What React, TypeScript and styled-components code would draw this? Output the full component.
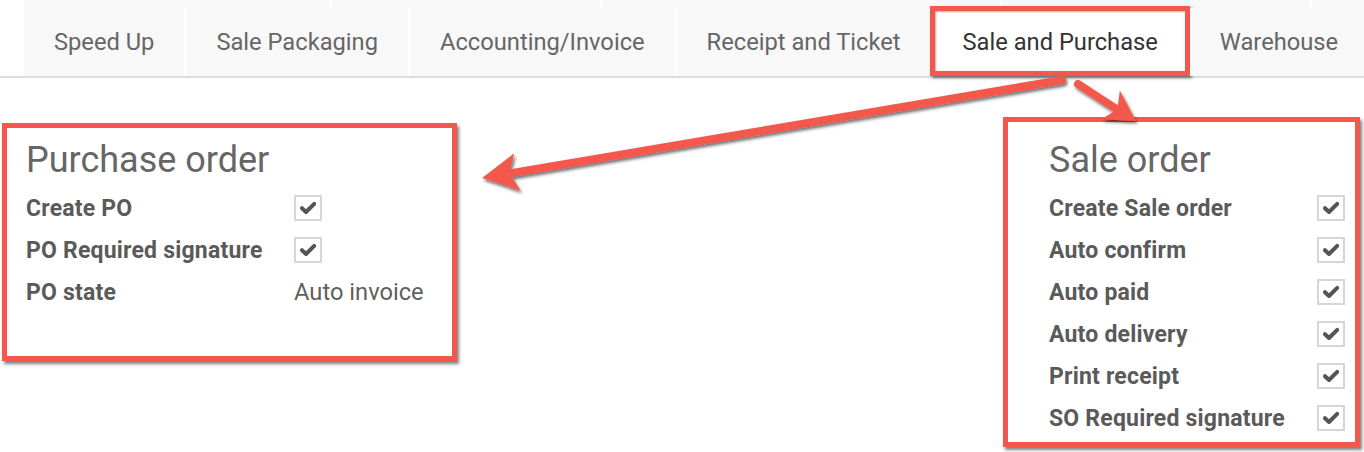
import React from "react";
import styled, { createGlobalStyle } from "styled-components";

const RED = "#f4584d";

const Global = createGlobalStyle`
  html, body { margin: 0; padding: 0; background: #ffffff; }
  body { font-family: Roboto, "Noto Sans", "Liberation Sans", sans-serif; }
`;

const Page = styled.div`
  position: relative;
  width: 1364px;
  height: 452px;
  overflow: hidden;
  background: #ffffff;
`;

const TabBar = styled.div`
  padding-left: 24px;
  border-bottom: 2px solid #dcdcdc;
`;

const CroppedRow = styled.div`
  display: flex;
  height: 8px;
  gap: 2px;
`;

const CroppedTab = styled.div<{ $w: number }>`
  flex: 0 0 ${(p) => p.$w}px;
  background: #f8f8f8;
  &:last-child { flex: 1; }
`;

const TabRow = styled.div`
  display: flex;
  height: 68px;
  gap: 2px;
`;

const Tab = styled.div<{ $active?: boolean; $grow?: boolean }>`
  position: relative;
  display: flex;
  align-items: center;
  padding: 0 30px 0 30px;
  flex: ${(p) => (p.$grow ? "1" : "0 0 auto")};
  background: ${(p) => (p.$active ? "#ffffff" : "#f8f8f8")};
  color: ${(p) => (p.$active ? "#333333" : "#666666")};
  font-size: 23.7px;
  white-space: nowrap;
  ${(p) =>
    p.$active &&
    `
    &::after {
      content: "";
      position: absolute;
      left: -3px;
      right: -2px;
      top: -2px;
      bottom: 0px;
      border: 5px solid ${RED};
      box-shadow: 2px 2px 3px rgba(0,0,0,0.55), inset 1px 1px 2px rgba(0,0,0,0.3);
    }
  `}
`;

const Content = styled.div`
  display: flex;
  justify-content: space-between;
  align-items: flex-start;
  padding: 0 4px 0 2px;
`;

const Group = styled.section<{ $top: number; $w: number; $pt: number; $pl: number; $pb: number }>`
  margin-top: ${(p) => p.$top}px;
  width: ${(p) => p.$w}px;
  box-sizing: border-box;
  border: 5px solid ${RED};
  box-shadow: 2px 3px 3px rgba(0, 0, 0, 0.5);
  padding: ${(p) => p.$pt}px 0 ${(p) => p.$pb}px ${(p) => p.$pl}px;
`;

const Title = styled.h2`
  margin: 0 0 6px 0;
  font-size: 36px;
  line-height: 42px;
  font-weight: 400;
  color: #666666;
`;

const Row = styled.div`
  display: grid;
  grid-template-columns: 268px auto;
  align-items: center;
  height: 42px;
`;

const Label = styled.span`
  font-size: 23px;
  letter-spacing: 0.2px;
  font-weight: 700;
  color: #5a5a5a;
`;

const Value = styled.span`
  font-size: 23.7px;
  color: #5f5f5f;
`;

const Box = styled.span`
  display: flex;
  align-items: center;
  justify-content: center;
  width: 28px;
  height: 26px;
  box-sizing: border-box;
  border: 2px solid #d6d6d6;
  background: #ffffff;
`;

const Overlay = styled.svg`
  position: absolute;
  left: 0;
  top: 0;
  pointer-events: none;
`;

const Check = () => (
  <Box>
    <svg width="16" height="14" viewBox="0 0 16 14">
      <path
        d="M2 7.2 L6 11 L14.2 2.8"
        fill="none"
        stroke="#555555"
        strokeWidth="4"
        strokeLinecap="round"
        strokeLinejoin="round"
      />
    </svg>
  </Box>
);

type Field = { label: string; value?: string };

const purchase: Field[] = [
  { label: "Create PO" },
  { label: "PO Required signature" },
  { label: "PO state", value: "Auto invoice" },
];

const sale: Field[] = [
  { label: "Create Sale order" },
  { label: "Auto confirm" },
  { label: "Auto paid" },
  { label: "Auto delivery" },
  { label: "Print receipt" },
  { label: "SO Required signature" },
];

const Fields = ({ items }: { items: Field[] }) => (
  <>
    {items.map((f) => (
      <Row key={f.label}>
        <Label>{f.label}</Label>
        {f.value ? <Value>{f.value}</Value> : <Check />}
      </Row>
    ))}
  </>
);

function arrowHead(sx: number, sy: number, tx: number, ty: number, len: number, half: number) {
  const dx = tx - sx;
  const dy = ty - sy;
  const l = Math.hypot(dx, dy);
  const ux = dx / l;
  const uy = dy / l;
  const bx = tx - ux * len;
  const by = ty - uy * len;
  const px = -uy;
  const py = ux;
  const nx = tx - ux * (len - 8);
  const ny = ty - uy * (len - 8);
  return `${tx},${ty} ${bx + px * half},${by + py * half} ${nx},${ny} ${bx - px * half},${by - py * half}`;
}

const Arrows = () => (
  <Overlay width="1364" height="452" viewBox="0 0 1364 452">
    <defs>
      <filter id="sh" x="-10%" y="-10%" width="120%" height="130%">
        <feDropShadow dx="1.5" dy="2.5" stdDeviation="1.5" floodColor="#000" floodOpacity="0.55" />
      </filter>
    </defs>
    <g filter="url(#sh)" fill={RED} stroke={RED}>
      <line x1="1062" y1="80" x2="500" y2="175" strokeWidth="8" strokeLinecap="round" />
      <polygon points={arrowHead(1062, 80, 482, 178, 36, 19)} stroke="none" />
      <line x1="1078" y1="84" x2="1118" y2="110" strokeWidth="8" strokeLinecap="round" />
      <polygon points={arrowHead(1078, 84, 1136, 121, 30, 17)} stroke="none" />
    </g>
  </Overlay>
);

export default function App() {
  return (
    <Page>
      <Global />
      <TabBar>
        <CroppedRow>
          <CroppedTab $w={306} />
          <CroppedTab $w={268} />
          <CroppedTab $w={398} />
          <CroppedTab $w={308} />
          <CroppedTab $w={50} />
        </CroppedRow>
        <TabRow>
          <Tab>Speed Up</Tab>
          <Tab>Sale Packaging</Tab>
          <Tab>Accounting/Invoice</Tab>
          <Tab>Receipt and Ticket</Tab>
          <Tab $active>Sale and Purchase</Tab>
          <Tab $grow>Warehouse</Tab>
        </TabRow>
      </TabBar>
      <Content>
        <Group $top={45} $w={455} $pt={11} $pl={19} $pb={43}>
          <Title>Purchase order</Title>
          <Fields items={purchase} />
        </Group>
        <Group $top={39} $w={357} $pt={17} $pl={41} $pb={3}>
          <Title>Sale order</Title>
          <Fields items={sale} />
        </Group>
      </Content>
      <Arrows />
    </Page>
  );
}
